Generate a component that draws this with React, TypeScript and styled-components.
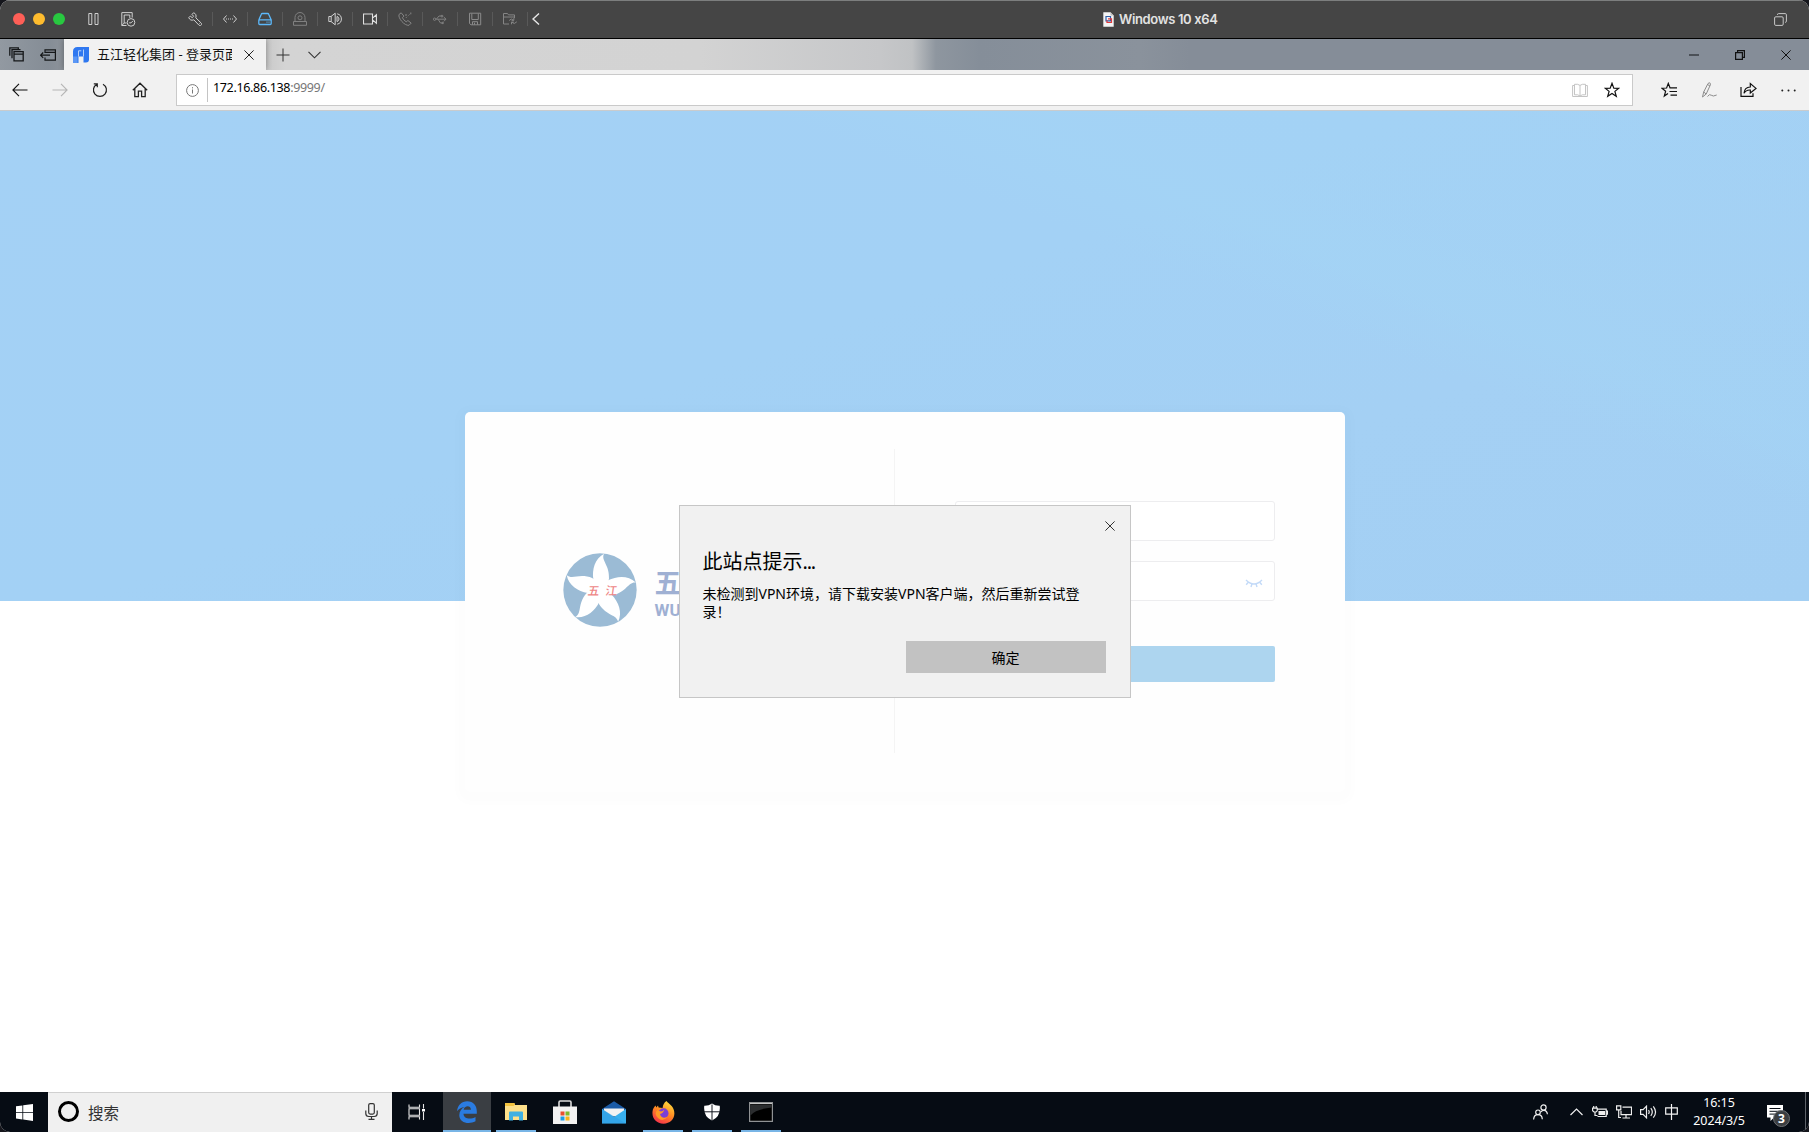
import React from "react";
import styled, { createGlobalStyle } from "styled-components";

const UI = `"Noto Sans", "Noto Sans CJK SC", sans-serif`;

const GlobalStyle = createGlobalStyle`
  * { box-sizing: border-box; }
  html, body { margin: 0; height: 100%; background: #15161c; overflow: hidden; }
  body { font-family: ${UI}; }
`;

const Frame = styled.div`
  display: flex;
  flex-direction: column;
  width: 1809px;
  height: 1132px;
  border-radius: 10px;
  overflow: hidden;
  background: #fff;
`;

/* ---------- host window bar ---------- */
const HostBar = styled.header`
  display: flex;
  align-items: center;
  height: 39px;
  flex: none;
  padding: 0 0 1px 13px;
  background: #454545;
  border-top: 1px solid #7c7e7e;
  border-bottom: 1px solid #000;
`;
const Lights = styled.div`
  display: flex;
  gap: 8px;
  width: 65px;
`;
const Light = styled.i<{ $c: string }>`
  width: 12px;
  height: 12px;
  border-radius: 50%;
  background: ${(p) => p.$c};
`;
const HostCell = styled.div<{ $w: number; $c?: string; $line?: boolean }>`
  display: flex;
  align-items: center;
  justify-content: center;
  width: ${(p) => p.$w}px;
  height: 14px;
  color: ${(p) => p.$c || "#d0d0d0"};
  border-left: 1px solid ${(p) => (p.$line ? "#595959" : "transparent")};
`;
const HostTitle = styled.div`
  display: flex;
  align-items: center;
  gap: 5px;
  margin-left: 560px;
  width: 671px;
  font: 600 13px/18px Inter, sans-serif;
  font-feature-settings: "calt" 0;
  letter-spacing: -0.36px;
  color: #e2e2e2;
  white-space: nowrap;
`;

/* ---------- browser chrome ---------- */
const TabStrip = styled.div`
  display: flex;
  height: 31px;
  flex: none;
  background: linear-gradient(90deg, #9299a1 0, #858d96 48px, #8d939a 64px, #c8c8c8 264px, #d4d4d4 285px, #d3d3d3 700px, #c6c7c9 880px, #c0c2c4 912px, #8e969f 936px, #858e99 980px, #8a929c 1140px, #858d98 1190px, #858d98 1809px);
`;
const StripCell = styled.div<{ $w: number }>`
  display: flex;
  width: ${(p) => p.$w}px;
  align-items: center;
  justify-content: center;
`;
const Tab = styled.div`
  display: flex;
  align-items: center;
  width: 202px;
  padding-left: 9px;
  background: #f1f1f1;
  box-shadow: 0 0 6px rgba(0, 0, 0, 0.35);
  clip-path: inset(0 -6px 0 -6px);
`;
const TabTitle = styled.span`
  width: 135px;
  margin: -2px 12px 0 8px;
  overflow: hidden;
  white-space: nowrap;
  font: 13px/20px ${UI};
  color: #111;
`;
const Spacer = styled.div`
  flex: 1;
`;
const NavBar = styled.div`
  display: flex;
  align-items: center;
  height: 41px;
  flex: none;
  background: #f1f1f1;
  border-bottom: 1px solid #c9cbcd;
`;
const AddressBox = styled.div`
  display: flex;
  align-items: center;
  width: 1457px;
  height: 32px;
  margin-left: 16px;
  margin-right: 16px;
  background: #fff;
  border: 1px solid #cacaca;
`;
const Info = styled.div`
  display: flex;
  align-items: center;
  justify-content: center;
  width: 31px;
  height: 24px;
  border-right: 1px solid #c4c4c4;
`;
const Url = styled.span`
  margin: -4px auto 0 5px;
  font: 12.5px/18px ${UI};
  letter-spacing: -0.34px;
  color: #777;
  b { font-weight: 400; color: #000; }
`;

/* ---------- page ---------- */
const Page = styled.main`
  position: relative;
  display: flex;
  align-items: center;
  justify-content: center;
  flex: 1;
  background:
    linear-gradient(21deg, rgba(163, 213, 245, 0) 66%, rgba(163, 213, 245, 0.45) 72.5%, rgba(163, 213, 245, 0.3) 78%, rgba(163, 213, 245, 0.1) 100%) 0 0 / 100% 490px no-repeat,
    linear-gradient(160deg, #a4d1f5 0%, #a3d1f5 45%, #a4d0f4 70%, #a3cff3 100%) 0 0 / 100% 490px no-repeat,
    #fff;
`;
const Card = styled.section`
  display: flex;
  align-items: center;
  width: 880px;
  height: 380px;
  border-radius: 5px;
  background: #fefefe;
  box-shadow: 0 3px 10px 8px rgba(0, 0, 0, 0.011);
`;
const Brand = styled.div`
  display: flex;
  align-items: center;
  width: 429px;
  padding: 0 0 23px 98px;
  gap: 18px;
`;
const BrandName = styled.div`
  padding-top: 6px;
  color: #9fb0d3;
  font-weight: 700;
  font-family: ${UI};
`;
const BrandCn = styled.div`
  font-size: 27px;
  line-height: 34px;
`;
const BrandEn = styled.div`
  font: 700 17px/20px Roboto, sans-serif;
`;
const Divider = styled.div`
  width: 1px;
  height: 304px;
  margin-bottom: 2px;
  background: #f4f4f4;
`;
const Form = styled.div`
  display: flex;
  flex-direction: column;
  width: 320px;
  margin: 0 0 20px 60px;
`;
const Field = styled.div`
  display: flex;
  align-items: center;
  justify-content: flex-end;
  height: 40px;
  margin-bottom: 20px;
  padding: 4px 11px 0 0;
  border: 1px solid #ededef;
  border-radius: 3px;
  background: #fff;
`;
const Login = styled.button`
  height: 36px;
  margin-top: 25px;
  border: 0;
  border-radius: 2px;
  background: #add5ef;
  color: #fff;
  font: 16px/20px ${UI};
`;
const Overlay = styled.div`
  position: absolute;
  inset: 0;
  display: grid;
  place-items: center;
`;
const Dialog = styled.div`
  display: flex;
  flex-direction: column;
  width: 452px;
  height: 193px;
  padding: 15px 24px 24px;
  background: #f1f1f1;
  border: 1px solid #c6c6c6;
`;
const DialogClose = styled.div`
  display: flex;
  align-self: flex-end;
  margin-right: -9px;
  height: 10px;
`;
const DialogTitle = styled.h1`
  margin: 16px 0 0 -1px;
  font: 400 20px/30px ${UI};
  color: #000;
  span { letter-spacing: -1.2px; }
`;
const DialogText = styled.p`
  margin: 8px -2px 0 -1px;
  width: 380px;
  font: 14px/18px ${UI};
  color: #000;
`;
const DialogButton = styled.button`
  width: 200px;
  height: 32px;
  margin-top: auto;
  padding-bottom: 2px;
  align-self: flex-end;
  border: 0;
  background: #c2c2c2;
  color: #000;
  font: 14px/20px "Noto Sans CJK SC", sans-serif;
`;

/* ---------- taskbar ---------- */
const Taskbar = styled.footer`
  display: flex;
  height: 40px;
  flex: none;
  background: #060c14;
  color: #fff;
`;
const Task = styled.div<{ $w: number; $on?: boolean; $active?: boolean }>`
  display: flex;
  align-items: center;
  justify-content: center;
  width: ${(p) => p.$w}px;
  background: ${(p) => (p.$active ? "#3a3e43" : "transparent")};
  box-shadow: ${(p) => (p.$on ? "inset 0 -2px #78b5e6" : "none")};
`;
const Apps = styled.div`
  display: flex;
  gap: 9px;
  margin-left: 5px;
`;
const Search = styled.div`
  display: flex;
  align-items: center;
  width: 344px;
  padding: 0 14px 2px 10px;
  background: #f0f0f0;
  border-top: 1px solid #d0d0d0;
  color: #333;
  font: 15.5px/22px "Noto Sans CJK SC", sans-serif;
`;
const Ring = styled.i`
  width: 21px;
  height: 21px;
  margin-right: 9px;
  border: 3px solid #000;
  border-radius: 50%;
`;
const Clock = styled.div`
  width: 70px;
  padding-top: 2px;
  text-align: center;
  font: 12.5px/18px ${UI};
  letter-spacing: -0.1px;
`;
const Notice = styled.div`
  position: relative;
  width: 51px;
  padding: 12px 0 0 13px;
`;
const Count = styled.span`
  position: absolute;
  left: 19px;
  top: 18px;
  width: 17px;
  height: 17px;
  border-radius: 50%;
  border: 1px solid #6e7174;
  background: #3b3e41;
  text-align: center;
  font: 700 12px/15px ${UI};
`;
const DesktopEdge = styled.div`
  width: 4px;
  border-left: 1px solid #5d6269;
`;

type IconProps = { w: number; h?: number; s?: number; c?: string; children: React.ReactNode };
const Icon = ({ w, h = w, s = 1, c = "currentColor", children }: IconProps) => (
  <svg width={w} height={h} viewBox={`0 0 ${w} ${h}`} fill="none" stroke={c} strokeWidth={s}>
    {children}
  </svg>
);

const Cross = ({ size = 10, c = "#222" }) => (
  <Icon w={size} c={c}><path d={`M.4 .4L${size - 0.4} ${size - 0.4}M${size - 0.4} .4L.4 ${size - 0.4}`} /></Icon>
);

const hostIcons: { c: string; el: React.ReactNode }[] = [
  { c: "#d0d0d0", el: <path d="M5.5.8L4 2.4 5.6 4.3 4.2 5.7 2.3 4.1.8 5.6C1.5 7.8 3.5 8.8 5.8 7.8L11 13.2C12.5 14.5 14.5 12.5 13.1 11L7.8 5.8C8.7 3.3 7.5 1.3 5.5.8ZM11.5 11.5v.6" /> },
  { c: "#d0d0d0", el: <path d="M3.5 3.5L.5 7l3 3.5M10.5 3.5l3 3.5-3 3.5M3 7h1M5 7h1M7 7h1M9 7h1" /> },
  { c: "#5cb8fa", el: <path strokeWidth="1.3" d="M.8 8L3.2 2.4Q3.5 1.5 4.5 1.5h5q1 0 1.3.9L13.2 8v3.5q0 1-1 1H1.8q-1 0-1-1V8.5q.2-.7 1-.7h10.4q1 0 1 1M8.5 10.2h1M10.5 10.2h1" /> },
  { c: "#808080", el: <><path d="M2 9.5V5.5a5 5 0 0 1 10 0v4M.5 9.5h13v3.8H.5z" /><circle cx="7" cy="5.8" r="2" /></> },
  { c: "#d0d0d0", el: <path d="M.8 4.5H3L7.2 1.2v11.6L3 9.5H.8zM3.2 4.5v5M9 4.5v5M9.2 1.8q4.2 1 4.2 5.2t-4.2 5.2M9 4.4q2 .6 2 2.6T9 9.6" /> },
  { c: "#e0e0e0", el: <path strokeWidth="1.1" d="M.5 2h9v10h-9zM9.5 6.2L13.4 2.8v8.4L9.5 7.8" /> },
  { c: "#858585", el: <path d="M3.2.8L1 2.5C-.2 6 6.5 14 11 13.3l2.2-2.2-3.3-2.6-1.7 1.3Q5.3 8 4.4 5.7l1.5-1.6zM8 5.8l1-1M10.5 3.5l1-1M8 2v2M12.8.5v1.8" /> },
  { c: "#808080", el: <path d="M2.5 7.2H13M10.8 5l2.2 2.2-2.2 2.2M3.5 7L6 4h2.3M5 7.2L7.5 11H9.3M.4 7.2a1.2 1.2 0 1 1 2.4 0 1.2 1.2 0 1 1-2.4 0M8.2 3.4h1.5v1.5H8.2zM9 10.3h1.3v1.3H9z" /> },
  { c: "#8a8a8a", el: <path d="M1.5 1.2h11.2v11.6H3L1.5 11.5zM3.8 1.5v6h6.5v-6M4.5 12.8V9.7h5v3.1M6.5 10.7v2" /> },
  { c: "#858585", el: <path d="M6 12H.5V1.5h4l1 1.4h6v3.3M.5 5h11M6.2 8.5q2-2.8 4.3-.3M10.8 6.2v2.2H8.6M13.8 9.8q-2.500 3.200-5 .4M8.5 12.3v-2.2h2.3" /> },
];

const HostTop = () => (
  <HostBar>
    <Lights><Light $c="#fe5f57" /><Light $c="#febc2e" /><Light $c="#28c840" /></Lights>
    <HostCell $w={29}><Icon w={11} h={12}><path d="M.8.5h3v11h-3zM7 .5h3v11H7z" /></Icon></HostCell>
    <HostCell $w={41}><Icon w={15} h={15}><path d="M5.5 13.5H.8V.6h10.4v5M3.2 3h5.6v3M3.2 3v8h2.3M3.2 11l-2.2 2.3" /><circle cx="10" cy="10.4" r="3.8" /><path d="M8.2 10.8l1.8.1L11.8 9" /></Icon></HostCell>
    <HostCell $w={29}>{null}</HostCell>
    {hostIcons.map((it, i) => (
      <HostCell key={i} $w={35} $c={it.c} $line={i > 0}><Icon w={14}>{it.el}</Icon></HostCell>
    ))}
    <HostCell $w={16} $line><Icon w={8} h={12} s={1.4} c="#e8e8e8"><path d="M7 .5L1 6l6 5.5" /></Icon></HostCell>
    <HostTitle>
      <svg width="11" height="15" viewBox="0 0 11 15">
        <path d="M.3.3h7.2L10.7 3.6v11.1H.3z" fill="#f5f5f5" /><path d="M7.5.3v3.3h3.2" fill="#b9b9b9" />
        <path d="M3 4.5h4.5v4.3H3z" fill="none" stroke="#2e5da8" strokeWidth="1.2" /><path d="M5 6.8h3.5v3.7H4V8.3" fill="none" stroke="#e33b3b" strokeWidth="1.2" />
      </svg>
      Windows 10 x64
    </HostTitle>
    <Icon w={13} c="#c8c8c8"><rect x=".6" y="3.8" width="8.6" height="8.6" rx="1.2" /><path d="M3.4 1.8Q3.4.6 4.6.6h6.6q1.2 0 1.2 1.2v6.4q0 1.2-1.2 1.2" /></Icon>
  </HostBar>
);

const Star = "M8 1.3l1.8 4.8 5 .2-3.9 3.1 1.4 4.9L8 11.5l-4.3 2.8 1.4-4.9L1.2 6.3l5-.2z";

const Chrome = () => (
  <>
    <TabStrip>
      <StripCell $w={32}><Icon w={15} s={1.3} c="#151719"><path d="M5 4.7h9.2v9.2H5zM5 7.2h9M3 11.2V2.7h8.5M.8 8.8V.8h8.5v1.8" /></Icon></StripCell>
      <StripCell $w={32}><Icon w={16} h={12} s={1.2} c="#151719"><path d="M5 4V.8h10.4v10.4H5V8.5M5 3.3h10.4M.5 6.2H10M3.2 3.5L.6 6.2l2.6 2.7" /></Icon></StripCell>
      <Tab>
        <svg width="16" height="16" viewBox="0 0 16 16"><path d="M4.5 0H16v12.500q0 3-3 3h-2.500V9.500H5.500V16H0V4.500Q0 0 4.500 0z" fill="#2f78f0" /><path d="M0 9.500h4.500V16H0z" fill="#5b97f5" /><path d="M5.500 9.500V3.800h2.800M10.500 2.500v7" fill="none" stroke="#c4daf9" strokeWidth=".9" /></svg>
        <TabTitle>五江轻化集团 - 登录页面</TabTitle>
        <Cross />
      </Tab>
      <StripCell $w={34}><Icon w={14} c="#333"><path d="M7 .5v13M.5 7h13" /></Icon></StripCell>
      <StripCell $w={28}><Icon w={13} h={8} s={1.1} c="#333"><path d="M.5 .8l6 6 6-6" /></Icon></StripCell>
      <Spacer />
      <StripCell $w={46}><Icon w={10} s={1.4} c="#33373c"><path d="M0 5h10" /></Icon></StripCell>
      <StripCell $w={46}><Icon w={10} s={1.2} c="#111"><path d="M.6 2.6h6.8v6.8H.6zM2.6 2.4V.6h6.8v6.8H7.6" /></Icon></StripCell>
      <StripCell $w={46}><Cross c="#111" /></StripCell>
    </TabStrip>
    <NavBar>
      <StripCell $w={40}><Icon w={16} h={14} s={1.1} c="#111"><path d="M15.5 7H1M7 .8L.9 7 7 13.2" /></Icon></StripCell>
      <StripCell $w={40}><Icon w={16} h={14} s={1.1} c="#b5b5b5"><path d="M.5 7H15M9 .8L15.1 7 9 13.2" /></Icon></StripCell>
      <StripCell $w={40}><Icon w={16} s={1.2} c="#222"><path d="M4.9 2.2A6.5 6.5 0 1 0 11 2.2M5.3 5.2V1.9H1.8" /></Icon></StripCell>
      <StripCell $w={40}><Icon w={16} s={1.3} c="#222"><path d="M.8 8.2L8 1.2l7.2 7M2.8 6.5v8.2h3.6V9.2h3.2v5.5h3.6V6.5" /></Icon></StripCell>
      <AddressBox>
        <Info><Icon w={13} c="#777"><circle cx="6.5" cy="6.5" r="5.9" /><path d="M6.5 5.5v4M6.5 3.2v1.2" /></Icon></Info>
        <Url><b>172.16.86.138</b>:9999/</Url>
        <StripCell $w={25}><Icon w={16} h={15} c="#c4c4c4"><path d="M8 2.4Q6 .8 2.5 1.3v10.5Q6 11.2 8 13 10 11.2 13.5 11.8V1.3Q10 .8 8 2.4v10.5M2.5 2.5H.6v11h14.8v-11h-1.9" /></Icon></StripCell>
        <StripCell $w={40}><Icon w={16} s={1.2} c="#111"><path d={Star} /></Icon></StripCell>
      </AddressBox>
      <StripCell $w={41}><Icon w={17} h={16} s={1.2} c="#111"><path d="M10.5 5.8H9L7.3 1.4 5.6 6 1 6.2 4.6 9.3 3.3 14l3.7-2.5M9.5 5.8H16M8.5 9.5H16M9.5 13.2H16" /></Icon></StripCell>
      <StripCell $w={38}><Icon w={17} h={16} c="#8c8c8c"><path d="M1.5 15L2.7 10 7 1.5q2.8-2 2.3 1.5L5.2 12zM2.700 10l2.500 2M6.500 2.500l2.300 1.300M6.500 14.500q2-3 3.700-1.300t5.500-.2" /></Icon></StripCell>
      <StripCell $w={41}><Icon w={17} h={16} s={1.2} c="#111"><path d="M1 5v9.3h12v-3M4 11.2Q4.5 5.2 10.3 5V1.6L16 6.4l-5.7 4.5V8Q6 7.7 4 11.2z" /></Icon></StripCell>
      <StripCell $w={39}><Icon w={15} h={3} c="none"><g fill="#222"><circle cx="1.3" cy="1.5" r="1" /><circle cx="7.5" cy="1.5" r="1" /><circle cx="13.7" cy="1.5" r="1" /></g></Icon></StripCell>
    </NavBar>
  </>
);

const petal = "M-20 -32C-24 -62 -16 -94 12 -109C2 -88 30 -76 27 -32L0 0Z";

const Emblem = () => (
  <svg width="74" height="74" viewBox="-111 -111 222 222">
    <circle r="110" fill="#9bbbd5" />
    <g fill="#fff">
      {[0, 72, 144, 216, 288].map((a) => <path key={a} d={petal} transform={`rotate(${a})`} />)}
      <circle r="38" />
    </g>
    <g fill="#ee8585" fontFamily="Noto Sans CJK SC" fontWeight="500" fontSize="35" transform="skewX(-8)">
      <text x="-36" y="15">五</text><text x="17" y="15">江</text>
    </g>
  </svg>
);

const LoginPage = () => (
  <Page>
    <Card>
      <Brand>
        <Emblem />
        <BrandName><BrandCn>五</BrandCn><BrandEn>WU</BrandEn></BrandName>
      </Brand>
      <Divider />
      <Form>
        <Field />
        <Field><Icon w={18} h={9} s={1.4} c="#c3daf8"><path d="M1 1q8 8 16 0M3.5 3L1.2 5.8M7 4.8L6 8M11 4.8L12 8M14.5 3l2.3 2.8" /></Icon></Field>
        <Login>登录</Login>
      </Form>
    </Card>
    <Overlay>
      <Dialog>
        <DialogClose><Cross c="#333" /></DialogClose>
        <DialogTitle>此站点提示<span>...</span></DialogTitle>
        <DialogText>未检测到VPN环境，请下载安装VPN客户端，然后重新尝试登录！</DialogText>
        <DialogButton>确定</DialogButton>
      </Dialog>
    </Overlay>
  </Page>
);

const EdgeLogo = () => (
  <svg width="20" height="22" viewBox="0 0 20 22"><path d="M0 10.2C.8 4 4.6.3 10.2.3c6.3 0 9.6 4.6 9.6 9.8v2.6H6.5c.2 5.5 7.5 6 12 3.2v4.4C11.5 24 2.3 21.5 2.3 14.2c0-4 2.2-6.8 5.3-8.3C4.2 6.3 1.5 8 0 10.2zM6.6 8.7h7.3C14 3.8 7.3 4.2 6.6 8.7z" fill="#2a7be0" /></svg>
);
const Folder = () => (
  <svg width="22" height="20" viewBox="0 0 22 20"><path d="M0 1h9l1 2h12v15H0z" fill="#fde08a" /><path d="M0 1h9.5l.5 1.5L8.5 4H0z" fill="#f3c33f" /><path d="M4 10.5q0-1 1-1h12q1 0 1 1v8h-4v-4H8v4H4z" fill="#3fb0e2" /></svg>
);
const Store = () => (
  <svg width="24" height="24" viewBox="0 0 24 24"><path d="M6 8V2.2Q6 1 7.2 1h9.6Q18 1 18 2.2V8" fill="none" stroke="#dcdcdc" strokeWidth="1.6" /><path d="M0 6.5h24V24H0z" fill="#f2f2f2" /><path d="M7.5 11.5h4v4h-4z" fill="#e8502f" /><path d="M12.5 11.5h4v4h-4z" fill="#7fb92c" /><path d="M7.5 16.5h4v4h-4z" fill="#1e9de4" /><path d="M12.5 16.5h4v4h-4z" fill="#f9b41a" /></svg>
);
const Mail = () => (
  <svg width="24" height="23" viewBox="0 0 24 23"><path d="M0 8L12 .3 24 8v4H0z" fill="#1b5ba6" /><path d="M2 7.5h20v8H2z" fill="#f2f2f2" /><path d="M0 8l12 8 12-8v14.5H0z" fill="#38b0ee" /><path d="M0 8l24 14.5H0z" fill="#2c96e0" opacity=".4" /></svg>
);
const Firefox = () => (
  <svg width="23" height="23" viewBox="0 0 23 23">
    <defs><linearGradient id="fx" x1=".8" y1="0" x2=".3" y2="1"><stop offset="0" stopColor="#ffe23e" /><stop offset=".5" stopColor="#ff8a23" /><stop offset="1" stopColor="#f5314b" /></linearGradient></defs>
    <path d="M14.5 0c1 2 5.5 4 7 8 3 8-2 14.7-10 14.7C4 22.7-.5 17 .6 10 1 7.5 2 6 3.5 4.5l.8 2L6 4.5l.6 2 4 .4C11 4 12 1.5 14.5 0z" fill="url(#fx)" />
    <circle cx="11.5" cy="12.3" r="5" fill="#7a3fd8" /><path d="M5.5 9q4 3 7-.5-1.5 4-4.5 4.5 1.5 5.5 7.5 3-5 5.5-9.5 1T5.5 9z" fill="#ff9a26" />
  </svg>
);

const Bottom = () => (
  <Taskbar>
    <Task $w={48}><svg width="17" height="17" viewBox="0 0 17 17"><path d="M0 2.3L6.4 1.4V8H0zM7.2 1.3L17 0v8H7.2zM0 8.8h6.4v6.7L0 14.6zM7.2 8.8H17V17L7.2 15.6z" fill="#fff" /></svg></Task>
    <Search>
      <Ring />搜索<Spacer />
      <Icon w={13} h={17} s={1.2} c="#333"><rect x="3.7" y=".6" width="5.6" height="10.5" rx="1.5" /><path d="M.8 7.5v3q0 3 3 3h5.4q3 0 3-3v-3M6.5 13.5v2.7M3.5 16.3h6" /></Icon>
    </Search>
    <Task $w={48}><Icon w={17} h={16} s={1.1} c="#e6e6e6"><path d="M1 .5v2.8h10.5V.5M1 15.5v-2.8h10.5v2.8M1 4.8h10.5v6.4H1zM15.5 0v4.5M15.5 8v8" /><path d="M14 5h3v2.5h-3z" fill="#fff" stroke="none" /></Icon></Task>
    <Task $w={3}>{null}</Task>
    <Task $w={48} $on $active><EdgeLogo /></Task>
    <Apps>
      <Task $w={40} $on><Folder /></Task>
      <Task $w={40}><Store /></Task>
      <Task $w={40}><Mail /></Task>
      <Task $w={40} $on><Firefox /></Task>
      <Task $w={40} $on><svg width="16" height="18" viewBox="0 0 17 18"><path d="M8.5 0Q12 2.5 16.7 2.3 18 14 8.5 18-1 14 .3 2.3 5 2.5 8.5 0z" fill="#fff" /><path d="M8.5 1v17M0 8.8h17" stroke="#060c14" strokeWidth="1" /></svg></Task>
      <Task $w={40} $on><svg width="24" height="20" viewBox="0 0 24 20"><path d="M.6.6h22.8v18.8H.6z" fill="#000" stroke="#8f9294" strokeWidth="1.2" /><path d="M1.2 2.5h21.6v3Q7 7 2 13H1.2z" fill="#2b2d2f" /><path d="M1 1.5h22" stroke="#c4c4c4" /></svg></Task>
    </Apps>
    <Spacer />
    <Task $w={44}><Icon w={15} h={16} s={1.2} c="#eee"><circle cx="10.5" cy="3.5" r="2.6" /><circle cx="5" cy="8.3" r="2.3" /><path d="M.6 15.5q.3-4.8 4.4-4.8t4.3 4.5M8 8q1-1.8 3-1.7 3 .1 3.4 4" /></Icon></Task>
    <Task $w={28}><Icon w={13} h={8} s={1.2} c="#eee"><path d="M.5 7l6-6 6 6" /></Icon></Task>
    <Task $w={20}><Icon w={16} h={12} s={1.2} c="#eee"><path d="M5 3.2h9.2v7.3H5.5M14.5 5.2h1v3h-1M.6 2.2h4.6v2.6L4 6H2L.6 4.8zM1.7 0v2M4.2 0v2M3 6v3.5h2.5" /><path d="M6.5 5H13v4H6.5z" fill="#eee" stroke="none" /></Icon></Task>
    <Task $w={28}><Icon w={16} h={14} s={1.2} c="#eee"><path d="M6.5 2.2h9v7.5H5V6M10 9.8v3M6.5 13h7.5M.6.8h4.2v4H.6zM2.7 5v7.5H5" /></Icon></Task>
    <Task $w={20}><Icon w={17} h={14} s={1.2} c="#eee"><path d="M.6 4.7h2.5L6.5 1.2v11.6L3.1 9.3H.6zM8.5 5q1.4 2 0 4M10.8 3.2q3 3.8 0 7.6M13.3 1.3q4.5 5.7 0 11.4" /></Icon></Task>
    <Task $w={26}><Icon w={13} h={16} s={1.2} c="#f4f4f4"><path d="M.7 3.8h11.6v6.4H.7zM6.5 0v16" /></Icon></Task>
    <Clock>16:15<br />2024/3/5</Clock>
    <Notice>
      <svg width="16" height="16" viewBox="0 0 16 16"><path d="M0 0h16v12.5H7L3.5 16v-3.5H0z" fill="#fff" /><path d="M2.5 3.5h11M2.5 6.3h11M2.5 9.1h8" stroke="#060c14" /></svg>
      <Count>3</Count>
    </Notice>
    <DesktopEdge />
  </Taskbar>
);

export default function App() {
  return (
    <>
      <GlobalStyle />
      <Frame>
        <HostTop />
        <Chrome />
        <LoginPage />
        <Bottom />
      </Frame>
    </>
  );
}
